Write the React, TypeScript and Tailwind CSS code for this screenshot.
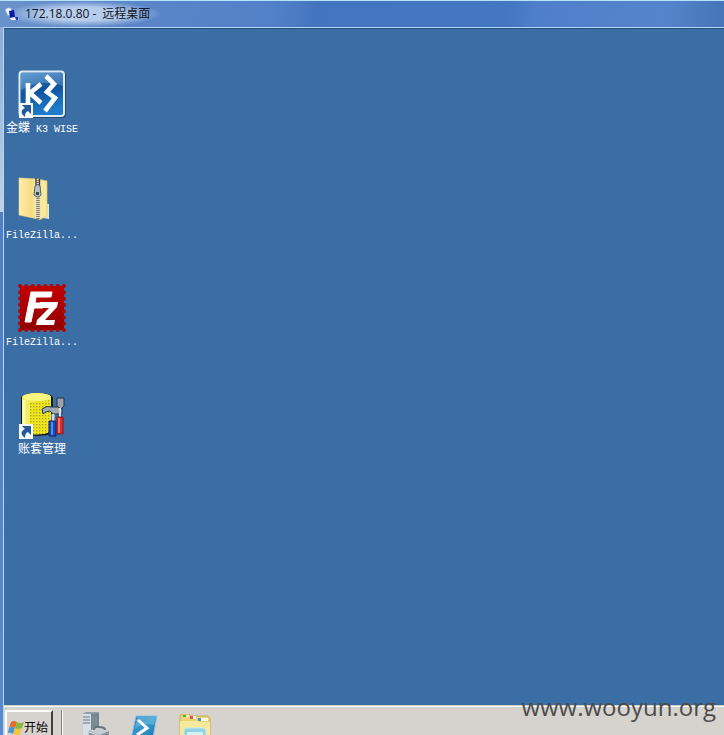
import type { ReactNode } from 'react';

function ShortcutArrow() {
  return (
    <g>
      <rect x="1" y="33" width="14" height="15" fill="#f4f8fb" />
      <path d="M4 35h9v9l-3-3c-2 1-3 2-3 6-5-4-4-7 0-9z" fill="#235899" />
    </g>
  );
}

function K3Icon() {
  return (
    <svg viewBox="0 0 48 48" className="size-12" aria-hidden="true">
      <defs>
        <linearGradient id="k3" x1="0" y1="0" x2="0.3" y2="1">
          <stop offset="0" stopColor="#4d8fc9" />
          <stop offset="0.5" stopColor="#0f519c" />
          <stop offset="1" stopColor="#1d7bc9" />
        </linearGradient>
      </defs>
      <rect x="1" y="1" width="47" height="47" rx="4" fill="#24496f" />
      <rect x="0.5" y="0.5" width="46.5" height="46.5" rx="4" fill="#dfe9f1" />
      <rect x="2.5" y="2.5" width="42.5" height="42.5" rx="2" fill="url(#k3)" />
      <path d="M3 5q0-2 2-2h38q2 0 2 2v11Q25 8 3 20z" fill="#8fbde0" opacity="0.35" />
      <path d="M10 13v20M23 14L12 23l11 10" fill="none" stroke="#fff" strokeWidth="4.6" />
      <path d="M28 6l8 8-7 8 8 6-10 13" fill="none" stroke="#fff" strokeWidth="4.6" />
      <ShortcutArrow />
    </svg>
  );
}

function ZipFolderIcon() {
  return (
    <svg viewBox="0 0 48 48" className="size-12" aria-hidden="true">
      <defs>
        <linearGradient id="zip" x1="0" y1="0" x2="1" y2="0">
          <stop offset="0" stopColor="#fdeeb0" />
          <stop offset="0.65" stopColor="#f6dc80" />
          <stop offset="1" stopColor="#fff0ac" />
        </linearGradient>
      </defs>
      <path d="M25 26l6 1v15l-6-1z" fill="#dce8dd" />
      <path d="M20 2l9 2v35l-8 4z" fill="#fbe999" stroke="#e3c968" strokeWidth="0.7" />
      <path d="M1 1l19 1v40L1 38z" fill="url(#zip)" stroke="#f0d984" strokeWidth="0.6" />
      <path d="M20 3v39" stroke="#e4e0c4" strokeWidth="5" />
      <path d="M20 3v39" stroke="#81786b" strokeWidth="3.5" strokeDasharray="1 1" />
      <path d="M18 1v12M21.5 2v10" stroke="#343b43" strokeWidth="1.3" />
      <path d="M17 9q3-3 5 0l1 9q-3 4-7 0z" fill="#bac1c5" stroke="#56606a" />
      <path d="M18 15h3v3h-3z" fill="#354352" />
    </svg>
  );
}

function FileZillaIcon() {
  return (
    <svg viewBox="0 0 48 48" className="size-12" aria-hidden="true">
      <defs>
        <linearGradient id="fz" x1="0" y1="0" x2="0" y2="1">
          <stop offset="0" stopColor="#c40000" />
          <stop offset="1" stopColor="#900000" />
        </linearGradient>
      </defs>
      <rect x="2" y="2" width="44" height="44" fill="url(#fz)" />
      <rect x="2" y="2" width="44" height="44" fill="none" stroke="#ae0707" strokeWidth="4" strokeLinecap="round" strokeDasharray="0.1 6.186" />
      <path d="M13 8h21l-1 5H18l-1 6h9l-1 5h-9l-3 14H7z" fill="#fff" />
      <path d="M22 18h18l-1 5-12 13h10l-1 5H18l1-5 12-12h-9z" fill="#fff" />
      <path d="M13 8h21l-1 5H18l-1 6h9l-1 5h-9l-3 14H7z" fill="none" stroke="#fff" />
    </svg>
  );
}

function AccountIcon() {
  return (
    <svg viewBox="0 0 48 48" className="size-12" aria-hidden="true">
      <defs>
        <pattern id="dots" width="3" height="3" patternUnits="userSpaceOnUse">
          <rect width="3" height="3" fill="#f0e722" />
          <rect width="1.4" height="1.4" fill="#aaa51b" />
        </pattern>
      </defs>
      <path d="M3 7c0-6 31-7 32 0v33c-3 7-29 6-32 0z" fill="#141b17" />
      <path d="M4 6c1-5 28-5 29 0v33c-3 6-26 5-29 0z" fill="#f5ed5c" />
      <path d="M12 11l21-2v31q-8 5-21 3z" fill="url(#dots)" />
      <path d="M6 9v26" stroke="#fffbb0" strokeWidth="3" />
      <ellipse cx="19" cy="6" rx="14" ry="4" fill="#f8f580" />
      <path d="M24 18q5-4 10-2h10v7h-9l-3-3q-4 0-7 3z" fill="#a1a9b1" stroke="#263744" />
      <path d="M35 23v8" stroke="#d4dadd" strokeWidth="3" />
      <path d="M39 7h7v8l-3 3-4-3z" fill="#9ca2ab" stroke="#223244" />
      <path d="M42 17v11" stroke="#dce1e4" strokeWidth="2" />
      <path d="M31 30h7v15h-7z" fill="#154bbc" stroke="#10256b" />
      <path d="M39 26h6v17h-6z" fill="#e22924" stroke="#821b25" />
      <path d="M34 31v13" stroke="#64a3ef" strokeWidth="1.5" />
      <path d="M41 27v15" stroke="#ff8e78" strokeWidth="1.5" />
      <ShortcutArrow />
    </svg>
  );
}

function Shortcut({ icon, children }: { icon: ReactNode; children: ReactNode }) {
  return (
    <button type="button" className="flex h-[107px] w-[76px] flex-col items-center">
      {icon}
      <span className="mt-[3px] h-4 whitespace-nowrap font-['Liberation_Mono','Noto_Sans_CJK_SC',monospace] text-[10px] leading-4 text-white">
        {children}
      </span>
    </button>
  );
}

function RemoteIcon() {
  return (
    <svg viewBox="0 0 16 16" className="size-4" aria-hidden="true">
      <path d="M1 4q2-3 6-2l2 6-5 2z" fill="#edf5fa" stroke="#8bacc3" strokeWidth="0.7" />
      <path d="M5 5l5-1 1 7-5 1z" fill="#0718a8" />
      <path d="M6 12l6-1 3 3H7z" fill="#f4f8f7" />
      <path d="M11 11h3v3h-2z" fill="#173da6" />
    </svg>
  );
}

function WindowsIcon() {
  return (
    <svg viewBox="0 0 16 16" className="size-4" aria-hidden="true">
      <path d="M3 2q3-2 6 0L7 8Q4 6 1 8z" fill="#e66b36" />
      <path d="M9 2q3 2 7 0l-2 6q-4 2-7 0z" fill="#85b944" />
      <path d="M1 8q3-2 6 0l-2 6q-3-2-5-1z" fill="#4795d9" />
      <path d="M7 8q3 2 7 0l-2 6q-3 2-7 0z" fill="#f4c53b" />
    </svg>
  );
}

function ServerIcon() {
  return (
    <svg viewBox="0 0 32 32" className="size-8" aria-hidden="true">
      <path d="M3 2l4-2h13v25H4z" fill="#92a0a9" />
      <path d="M3 2h9v27H4z" fill="#d7e0e4" />
      <path d="M12 2l8-1v25l-8 2z" fill="#73838f" />
      <path d="M4 5h7M4 8h7M4 11h7" stroke="#657581" />
      <path d="M14 4v20M17 4v18" stroke="#8b999f" />
      <path d="M10 19l9-4 11 4v9l-9 4-12-4z" fill="#879299" />
      <path d="M10 19l9-4 11 4-9 4z" fill="#c7cfd3" />
      <path d="M15 18q0-4 5-3 6 0 6 3" fill="none" stroke="#65727b" strokeWidth="2" />
      <path d="M10 20l11 4v6" fill="none" stroke="#dfe5e8" />
    </svg>
  );
}

function PowerShellIcon() {
  return (
    <svg viewBox="0 0 32 32" className="size-8" aria-hidden="true">
      <defs>
        <linearGradient id="ps" x1="0" y1="0" x2="1" y2="1">
          <stop stopColor="#2f7fb9" />
          <stop offset="0.5" stopColor="#3499ce" />
          <stop offset="1" stopColor="#14649f" />
        </linearGradient>
      </defs>
      <path d="M7 2h21l-5 27H1z" fill="url(#ps)" stroke="#8bc5e5" />
      <path d="M8 3h19l-2 8Q15 8 6 15z" fill="#a3d4ed" opacity="0.35" />
      <path d="M9 6l9 8-10 7" fill="none" stroke="#fff" strokeWidth="3" />
      <path d="M15 22h8" stroke="#fff" strokeWidth="2" />
    </svg>
  );
}

function ExplorerIcon() {
  return (
    <svg viewBox="0 0 32 32" className="size-8" aria-hidden="true">
      <path d="M1 2l1-2h8l2 2h17l2 2v26H1z" fill="#ead477" stroke="#c5ae57" />
      <path d="M4 1h6v2H4z" fill="#fffce3" />
      <path d="M4 1h3v2H4z" fill="#44ae39" />
      <path d="M11 2h6v3h-6z" fill="#fffce3" />
      <path d="M11 2h3v3h-3z" fill="#d95542" />
      <path d="M19 4h10v3H19z" fill="#fffce3" />
      <path d="M19 4h3v3h-3z" fill="#429ac4" />
      <path d="M1 7h17l3 1h10v24H1z" fill="#f6e99a" />
      <path d="M5 16q1-2 3-2h16q3 0 3 2v16H5z" fill="#94d0e3" stroke="#c7edf3" />
      <path d="M8 18h16v5H8z" fill="#d1f2f0" />
    </svg>
  );
}

export default function App() {
  return (
    <div className="flex h-screen flex-col overflow-hidden bg-[#d4d0c8] font-['Open_Sans','Noto_Sans_CJK_SC',sans-serif]">
      <header className="flex h-[27px] shrink-0 items-center border-t border-[#b6e5fa] bg-[linear-gradient(95deg,#6a93cc_0%,#5a85c8_20%,#5280c8_38%,#4275bd_44%,#4377c0_70%,#4f7fc9_74%,#5684cc_92%,#4674b8_100%)] pl-1">
        <div className="flex h-full items-center gap-[5px] bg-[radial-gradient(closest-side,#b7cceb_50%,transparent)] pr-3">
          <RemoteIcon />
          <h1 className="flex gap-1.5 whitespace-nowrap text-xs text-[#101725]">
            <span>172.18.0.80 -</span>
            <span>远程桌面</span>
          </h1>
        </div>
      </header>

      <div className="flex min-h-0 flex-1">
        <div className="flex w-[3px] shrink-0 flex-col">
          <div className="h-[185px] bg-linear-to-b from-[#88add7] to-[#bfd2e8]" />
          <div className="flex-1 bg-linear-to-b from-[#4f7fc3] to-[#5c8bcd]" />
        </div>
        <div className="flex min-w-0 flex-1 flex-col border-l border-t border-[#b8d5f1]">
          <main className="flex min-h-0 flex-1 flex-col border-t border-[#244f7c] bg-[#3a6ea5] pt-[41px]">
            <Shortcut icon={<K3Icon />}>
              <span className="text-xs leading-4">金蝶</span> K3 WISE
            </Shortcut>
            <Shortcut icon={<ZipFolderIcon />}>FileZilla...</Shortcut>
            <Shortcut icon={<FileZillaIcon />}>FileZilla...</Shortcut>
            <Shortcut icon={<AccountIcon />}>
              <span className="text-xs leading-4">账套管理</span>
            </Shortcut>
          </main>

          <footer className="relative flex h-[30px] shrink-0 items-start border-t border-[#d4d0c8] bg-[#d6d3ce]">
            <div className="flex w-full items-start border-t border-white pt-[3px]">
              <button type="button" className="ml-px flex h-9 w-12 shrink-0 items-center border-2 border-b-[#404040] border-l-white border-r-[#404040] border-t-white pl-px text-xs text-black">
                <WindowsIcon />
                <span className="whitespace-nowrap">开始</span>
              </button>
              <div className="ml-2 h-9 w-0.5 border-l border-r border-l-[#808080] border-r-white" />
              <div className="ml-4 flex gap-[18px]">
                <button type="button" aria-label="服务器管理器"><ServerIcon /></button>
                <button type="button" aria-label="PowerShell" className="pt-1"><PowerShellIcon /></button>
                <button type="button" aria-label="资源管理器" className="pt-1"><ExplorerIcon /></button>
              </div>
            </div>
            <p className="absolute right-2 bottom-2 whitespace-nowrap text-2xl leading-10 text-[#4c4c4c]">www.wooyun.org</p>
          </footer>
        </div>
      </div>
    </div>
  );
}
